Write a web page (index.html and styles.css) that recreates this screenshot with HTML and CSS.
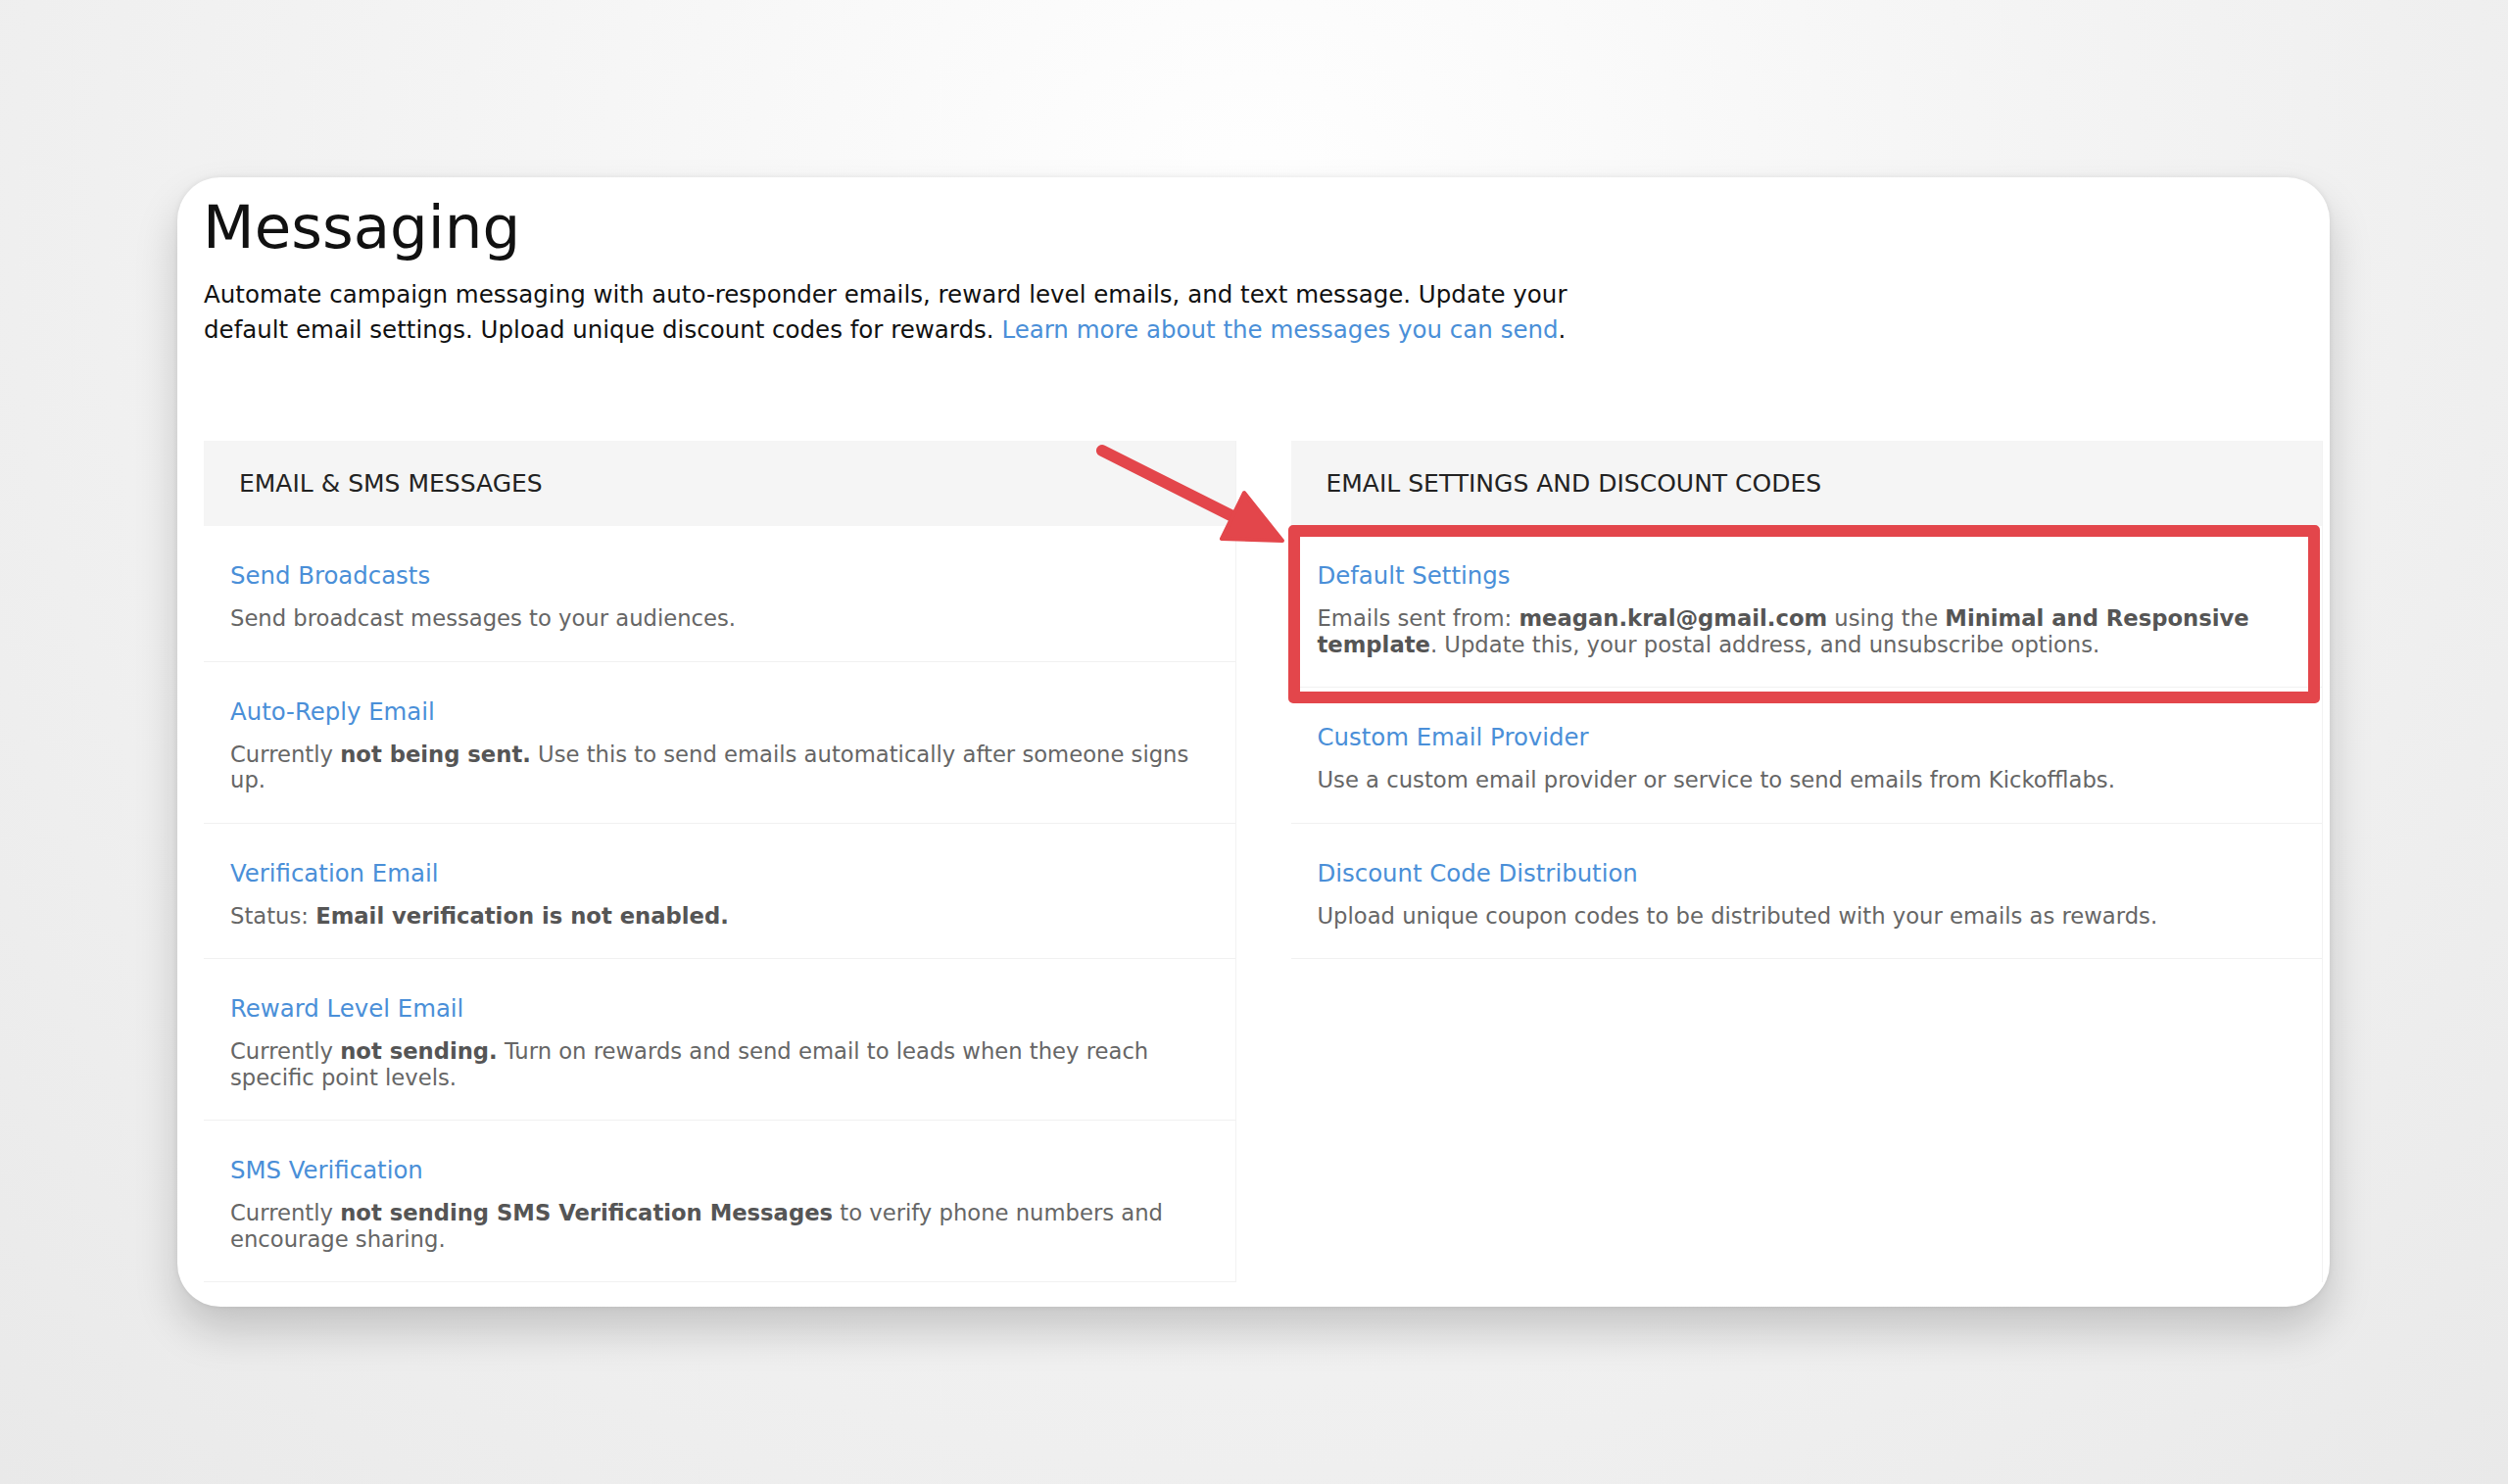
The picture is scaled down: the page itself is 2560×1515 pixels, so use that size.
FILE: index.html
```html
<!DOCTYPE html>
<html lang="en">
  <head>
    <meta charset="UTF-8" />
    <meta name="viewport" content="width=device-width, initial-scale=1.0" />
    <title>Messaging</title>
    <link rel="stylesheet" href="styles.css">
  </head>
  <body>
    <!-- Card utama -->
    <div class="card">
      <h1>Messaging</h1>
      <p class="intro">
        Automate campaign messaging with auto-responder emails, reward level emails, and text message. Update your
        default email settings. Upload unique discount codes for rewards.
        <a href="#">Learn more about the messages you can send</a>.
      </p>

      <div class="panels">
        <!-- Kolom kiri -->
        <section class="panel">
          <h2>Email &amp; SMS Messages</h2>
          <div class="item">
            <a href="#">Send Broadcasts</a>
            <p>Send broadcast messages to your audiences.</p>
          </div>
          <div class="item">
            <a href="#">Auto-Reply Email</a>
            <p>Currently <b>not being sent.</b> Use this to send emails automatically after someone signs up.</p>
          </div>
          <div class="item">
            <a href="#">Verification Email</a>
            <p>Status: <b>Email verification is not enabled.</b></p>
          </div>
          <div class="item">
            <a href="#">Reward Level Email</a>
            <p>Currently <b>not sending.</b> Turn on rewards and send email to leads when they reach specific point levels.</p>
          </div>
          <div class="item">
            <a href="#">SMS Verification</a>
            <p>Currently <b>not sending SMS Verification Messages</b> to verify phone numbers and encourage sharing.</p>
          </div>
        </section>

        <!-- Kolom kanan -->
        <section class="panel">
          <h2>Email Settings and Discount Codes</h2>
          <div class="item highlighted">
            <a href="#">Default Settings</a>
            <p>Emails sent from: <b>meagan.kral@gmail.com</b> using the <b>Minimal and Responsive template</b>. Update this, your postal address, and unsubscribe options.</p>
          </div>
          <div class="item">
            <a href="#">Custom Email Provider</a>
            <p>Use a custom email provider or service to send emails from Kickofflabs.</p>
          </div>
          <div class="item">
            <a href="#">Discount Code Distribution</a>
            <p>Upload unique coupon codes to be distributed with your emails as rewards.</p>
          </div>
        </section>
      </div>

      <!-- Panah anotasi -->
      <svg class="arrow" width="230" height="130" viewBox="0 0 230 130">
        <line x1="25" y1="20" x2="178" y2="97" stroke="#e3464b" stroke-width="12" stroke-linecap="round" />
        <polygon points="209,112 170,63 147,110" fill="#e3464b" stroke="#e3464b" stroke-width="4" stroke-linejoin="round" />
      </svg>
    </div>
  </body>
</html>
```

FILE: styles.css
```css
/* ====================== RESET DASAR ====================== */
* {
  margin: 0;
  padding: 0;
  box-sizing: border-box;
}
html,
body {
  height: 100%;
}

/* =================== BODY & CARD =================== */
body {
  font-family: "DejaVu Sans", Verdana, sans-serif;
  background: radial-gradient(ellipse at 50% 15%, #ffffff 0%, #f4f4f4 45%, #e9e9e9 100%);
  color: #111;
  padding: 181px 0 0 181px;
}
.card {
  position: relative;
  width: 2197px;
  background: #fff;
  border-radius: 44px;
  padding: 15px 7px 25px 27px;
  box-shadow: 0 24px 44px rgba(0, 0, 0, 0.18), 0 0 6px rgba(0, 0, 0, 0.08);
}
h1 {
  font-size: 61px;
  font-weight: normal;
  color: #111;
  margin-left: -1px;
}
.intro {
  font-size: 24.5px;
  line-height: 36px;
  max-width: 1440px;
  margin-top: 16px;
  color: #111;
}
a {
  color: #4a8fd8;
  text-decoration: none;
}

/* ======================= PANELS ======================= */
.panels {
  display: grid;
  grid-template-columns: 1fr 1fr;
  gap: 56px;
  margin-top: 95px;
}
.panel {
  border-right: 1px solid #f2f2f2;
}
.panel h2 {
  background: #f5f5f5;
  font-size: 25px;
  font-weight: normal;
  text-transform: uppercase;
  color: #222;
  padding: 30px 36px 30px;
  line-height: 27px;
}
.item {
  position: relative;
  padding: 36px 26px 30px 27px;
  border-bottom: 1px solid #f1f1f1;
}
.item a {
  display: block;
  font-size: 24.4px;
  line-height: 29px;
  margin-bottom: 16px;
}
.item p {
  font-size: 22.7px;
  line-height: 26.5px;
  color: #666;
}
.item b {
  color: #555;
}

/* ==================== ANOTASI MERAH ==================== */
.highlighted::after {
  content: "";
  position: absolute;
  top: -1px;
  left: -3px;
  right: 2px;
  bottom: -17px;
  border: 12px solid #e3464b;
  border-radius: 5px;
}
.arrow {
  position: absolute;
  left: 919px;
  top: 259px;
}
```
